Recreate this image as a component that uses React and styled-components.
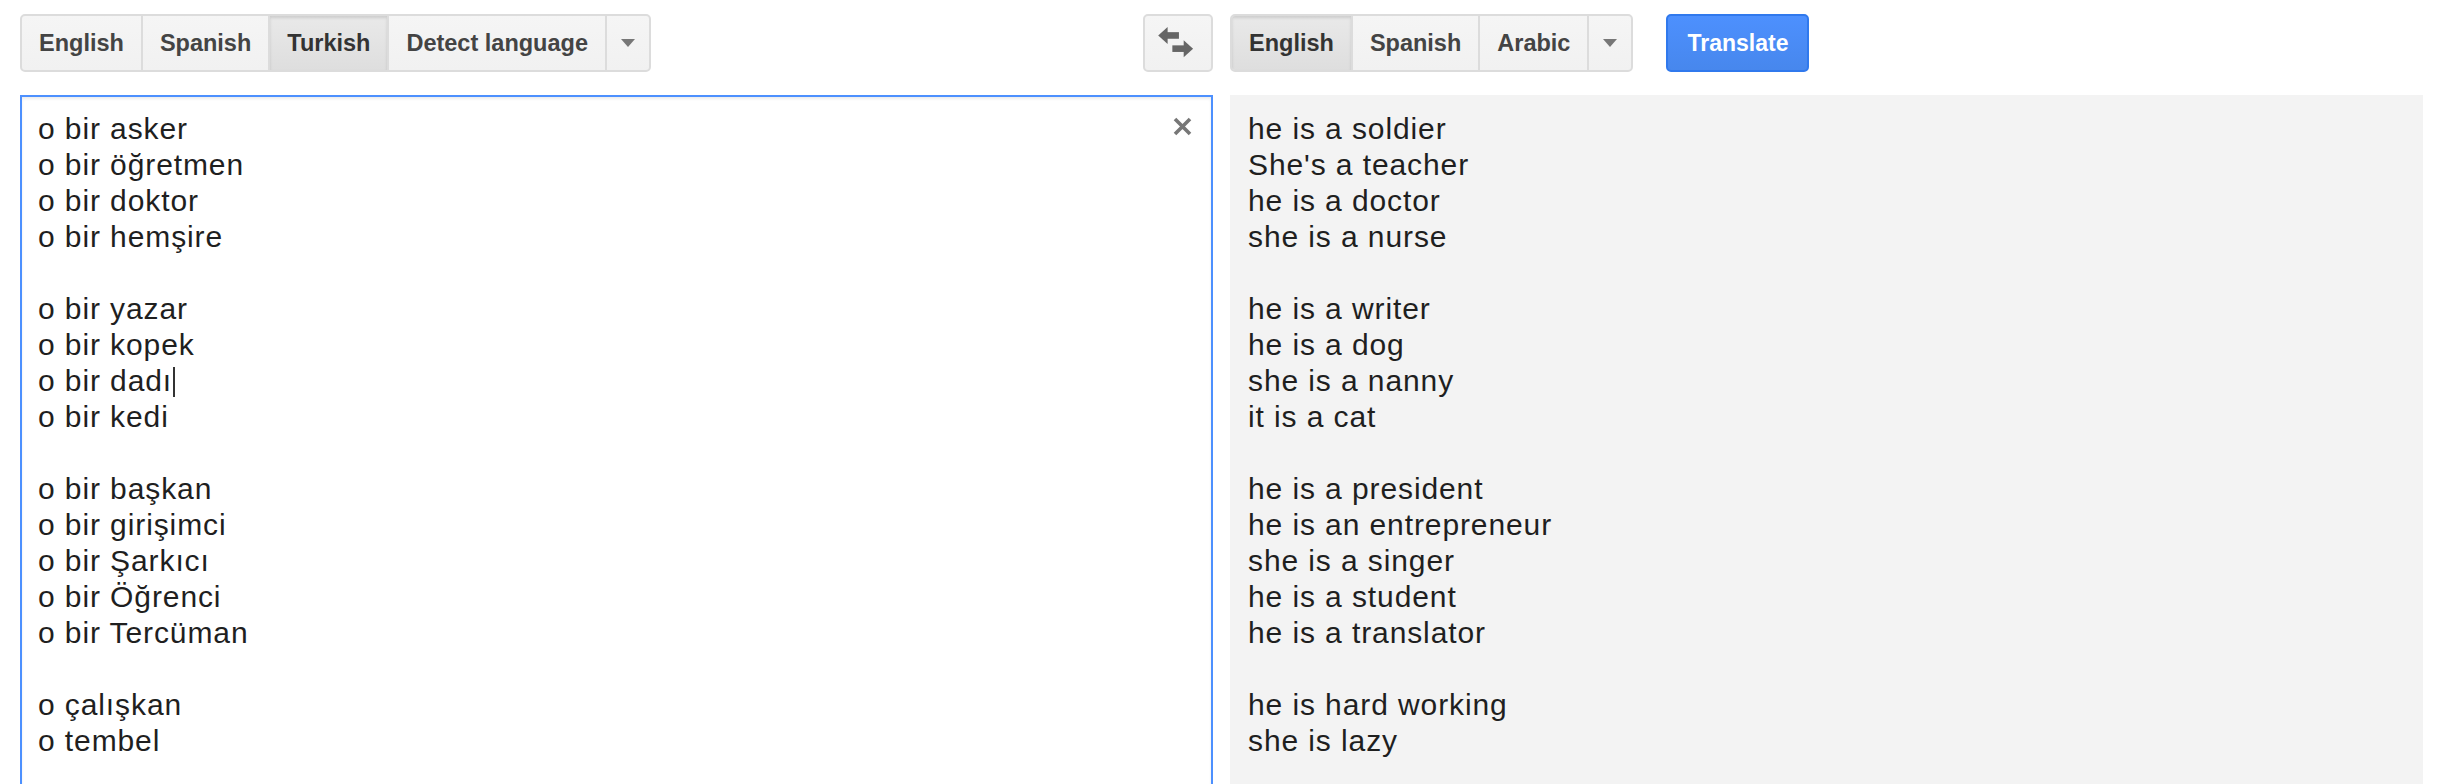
import React from "react";
import styled, { createGlobalStyle } from "styled-components";

const GlobalStyle = createGlobalStyle`
  html, body {
    margin: 0;
    padding: 0;
    background: #ffffff;
    overflow: hidden;
  }
  body {
    font-family: "Liberation Sans", Arial, sans-serif;
  }
`;

const sourceGroups = [
  ["o bir asker", "o bir öğretmen", "o bir doktor", "o bir hemşire"],
  ["o bir yazar", "o bir kopek", "o bir dadı", "o bir kedi"],
  ["o bir başkan", "o bir girişimci", "o bir Şarkıcı", "o bir Öğrenci", "o bir Tercüman"],
  ["o çalışkan", "o tembel"],
];

const resultGroups = [
  ["he is a soldier", "She's a teacher", "he is a doctor", "she is a nurse"],
  ["he is a writer", "he is a dog", "she is a nanny", "it is a cat"],
  ["he is a president", "he is an entrepreneur", "she is a singer", "he is a student", "he is a translator"],
  ["he is hard working", "she is lazy"],
];

const App = () => {
  return (
    <>
      <GlobalStyle />
      <Page>
        <SourceBar>
          <LangGroup>
            <LangButton>English</LangButton>
            <LangButton>Spanish</LangButton>
            <LangButton selected>Turkish</LangButton>
            <LangButton>Detect language</LangButton>
            <MenuButton>
              <Arrow />
            </MenuButton>
          </LangGroup>
          <SwapButton>
            <svg width="70" height="56" viewBox="0 0 70 56">
              <polygon points="14,20 24,11 24,29" fill="#666" />
              <rect x="23" y="16.5" width="13" height="7" fill="#666" />
              <rect x="29" y="30.5" width="13" height="7" fill="#666" />
              <polygon points="51,34 41,25 41,43" fill="#666" />
            </svg>
          </SwapButton>
        </SourceBar>

        <TargetBar>
          <LangGroup>
            <LangButton selected>English</LangButton>
            <LangButton>Spanish</LangButton>
            <LangButton>Arabic</LangButton>
            <MenuButton>
              <Arrow />
            </MenuButton>
          </LangGroup>
          <TranslateButton>Translate</TranslateButton>
        </TargetBar>

        <SourceBox>
          <ClearIcon>
            <svg width="21" height="19" viewBox="0 0 21 19">
              <path d="M3 2 L18 17 M18 2 L3 17" stroke="#777" strokeWidth="3.6" />
            </svg>
          </ClearIcon>
          {sourceGroups.map((group, gi) => (
            <Group key={gi}>
              {group.map((line) => (
                <Line key={line}>
                  {line}
                  {line === "o bir dadı" && <Caret />}
                </Line>
              ))}
            </Group>
          ))}
        </SourceBox>

        <ResultBox>
          {resultGroups.map((group, gi) => (
            <Group key={gi}>
              {group.map((line) => (
                <Line key={line}>{line}</Line>
              ))}
            </Group>
          ))}
        </ResultBox>
      </Page>
    </>
  );
};

const Page = styled.div`
  display: grid;
  grid-template-columns: 1193px 1193px;
  column-gap: 17px;
  row-gap: 23px;
  padding: 14px 0 0 20px;
`;

const SourceBar = styled.div`
  display: flex;
  justify-content: space-between;
  align-items: flex-start;
`;

const TargetBar = styled.div`
  display: flex;
  align-items: flex-start;
  gap: 33px;
`;

const LangGroup = styled.div`
  display: flex;
  height: 58px;
  box-sizing: border-box;
  border: 2px solid #dcdcdc;
  border-radius: 5px;
  background: linear-gradient(#f5f5f5, #f1f1f1);
  overflow: hidden;
`;

const LangButton = styled.div`
  display: flex;
  align-items: center;
  padding: 0 17px;
  font-size: 23.5px;
  font-weight: 700;
  color: ${(p) => (p.selected ? "#333" : "#444")};
  background: ${(p) => (p.selected ? "linear-gradient(#e9e9e9, #dedede)" : "transparent")};
  box-shadow: ${(p) => (p.selected ? "inset 0 2px 3px rgba(0,0,0,0.12)" : "none")};
  border-right: 2px solid #dcdcdc;
  white-space: nowrap;
`;

const MenuButton = styled.div`
  display: flex;
  align-items: center;
  justify-content: center;
  width: 42px;
`;

const Arrow = styled.div`
  width: 0;
  height: 0;
  border-left: 7.5px solid transparent;
  border-right: 7.5px solid transparent;
  border-top: 8px solid #777;
`;

const SwapButton = styled.div`
  display: flex;
  align-items: center;
  justify-content: center;
  width: 70px;
  height: 58px;
  box-sizing: border-box;
  border: 2px solid #dcdcdc;
  border-radius: 5px;
  background: linear-gradient(#f5f5f5, #f1f1f1);
`;

const TranslateButton = styled.div`
  display: flex;
  align-items: center;
  justify-content: center;
  width: 143px;
  height: 58px;
  box-sizing: border-box;
  border: 2px solid #3079ed;
  border-radius: 5px;
  background: linear-gradient(#4d90fe, #4787ed);
  color: #fff;
  font-size: 23px;
  font-weight: 700;
`;

const SourceBox = styled.div`
  position: relative;
  height: 740px;
  box-sizing: border-box;
  border: 2px solid #4d90fe;
  box-shadow: inset 0 2px 3px rgba(0, 0, 0, 0.08);
  padding: 14px 16px;
  background: #fff;
`;

const ResultBox = styled.div`
  height: 740px;
  box-sizing: border-box;
  padding: 16px 18px;
  background: #f3f3f3;
`;

const ClearIcon = styled.div`
  position: absolute;
  top: 20px;
  right: 18px;
  display: flex;
`;

const Group = styled.div`
  margin-bottom: 36px;
`;

const Line = styled.div`
  font-size: 30px;
  line-height: 36px;
  letter-spacing: 0.9px;
  color: #1f1f1f;
  white-space: nowrap;
`;

const Caret = styled.span`
  display: inline-block;
  width: 0;
  height: 30px;
  border-left: 2px solid #333;
  margin-left: 1px;
  vertical-align: -6px;
`;

export default App;
